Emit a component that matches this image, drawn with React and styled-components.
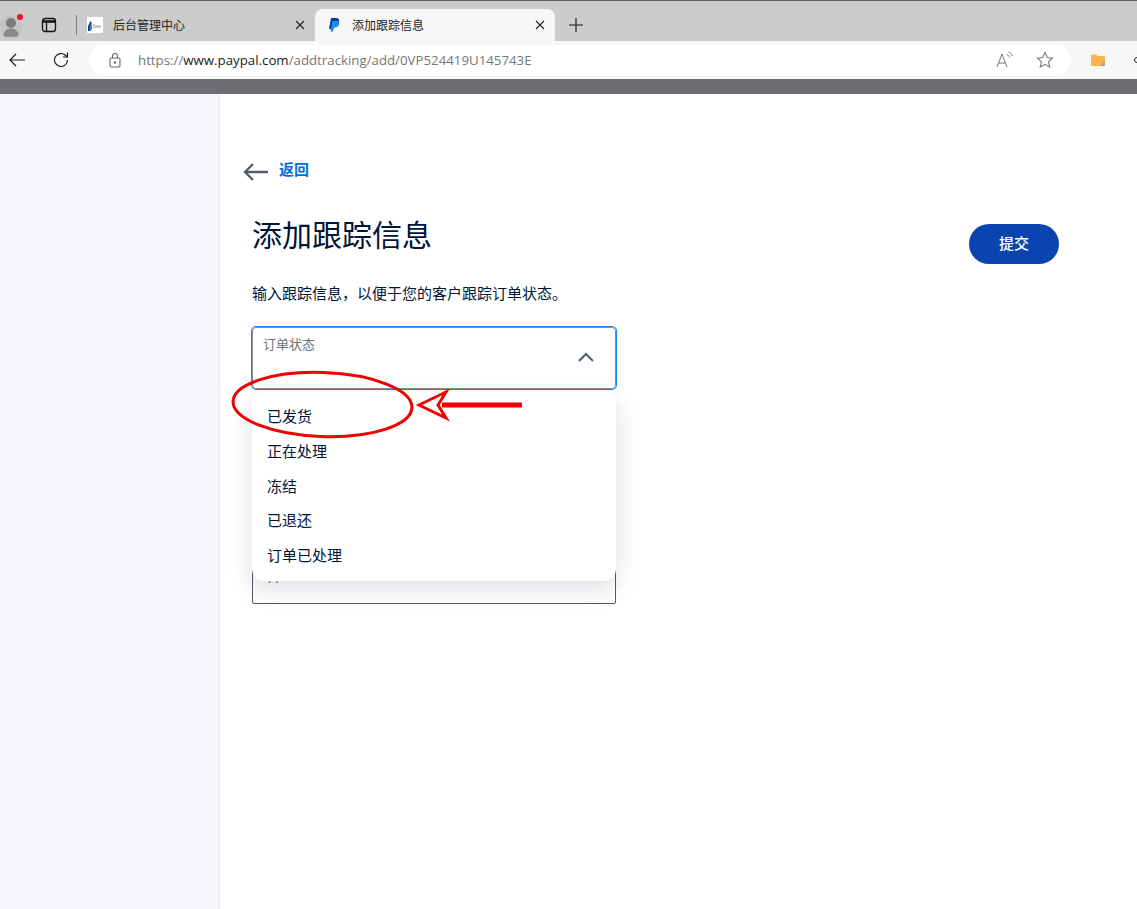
import React from 'react'
import styled, { createGlobalStyle } from 'styled-components'

const FONT = `"Liberation Sans", "Noto Sans CJK SC", sans-serif`

const Global = createGlobalStyle`
  html, body { margin: 0; padding: 0; background: #fff; }
  body { font-family: ${FONT}; overflow: hidden; }
`

const Page = styled.div`
  width: 1137px;
  height: 909px;
  display: flex;
  flex-direction: column;
  overflow: hidden;
  position: relative;
`

const TabBar = styled.div`
  height: 40px;
  background: #cccccc;
  border-top: 1px solid #5f5f5f;
  display: flex;
  align-items: flex-end;
  flex-shrink: 0;
`

const Profile = styled.div`
  width: 26px;
  height: 26px;
  position: relative;
  flex-shrink: 0;
  align-self: flex-start;
  margin-top: 13px;
`

const Badge = styled.span`
  position: absolute;
  top: 0;
  left: 17px;
  width: 6px;
  height: 6px;
  border-radius: 50%;
  background: #e8102a;
`

const TabIcon = styled.div`
  width: 46px;
  height: 32px;
  display: flex;
  align-items: center;
  justify-content: center;
  flex-shrink: 0;
`

const Divider = styled.div`
  width: 1px;
  height: 20px;
  background: #7d7d7d;
  margin: 0 10px 6px 4px;
  flex-shrink: 0;
`

const Tab = styled.div`
  width: ${p => p.$width}px;
  height: 32px;
  display: flex;
  align-items: center;
  flex-shrink: 0;
  background: ${p => (p.$active ? '#f7f7f7' : 'transparent')};
  border-radius: 8px 8px 0 0;
  font-size: 12px;
  color: #222;
  padding: 0 ${p => p.$padRight}px 1px ${p => p.$padLeft}px;
  box-sizing: border-box;
`

const TabTitle = styled.span`
  flex: 1;
  margin-left: ${p => p.$gap}px;
`

const NewTab = styled.div`
  width: 42px;
  height: 32px;
  display: flex;
  align-items: center;
  justify-content: center;
  flex-shrink: 0;
`

const Favicon = styled.div`
  width: 16px;
  height: 16px;
  background: #fff;
  flex-shrink: 0;
  overflow: hidden;
`

const Toolbar = styled.div`
  height: 38px;
  background: #f7f7f7;
  display: flex;
  align-items: center;
  flex-shrink: 0;
  padding-left: 5px;
`

const NavButton = styled.div`
  width: 24px;
  height: 24px;
  display: flex;
  align-items: center;
  justify-content: center;
  margin: 0 ${p => p.$right || 0}px 0 ${p => p.$left || 0}px;
  flex-shrink: 0;
`

const AddressBar = styled.div`
  width: 982px;
  height: 30px;
  border-radius: 15px;
  background: #fff;
  display: flex;
  align-items: center;
  flex-shrink: 0;
  padding: 0 17px 0 19px;
  box-sizing: border-box;
  gap: 22px;
`

const Url = styled.span`
  flex: 1;
  margin-left: -6px;
  font-family: "Open Sans", sans-serif;
  font-size: 13.27px;
  color: #767676;
  b { font-weight: 400; color: #1b1b1b; }
`

const EdgeDot = styled.span`
  width: 4px;
  height: 4px;
  border-radius: 50%;
  border: 1px solid #222;
  margin-left: 24px;
  flex-shrink: 0;
`

const Band = styled.div`
  height: 15px;
  background: #6e6d72;
  flex-shrink: 0;
`

const Body = styled.div`
  flex: 1;
  display: flex;
  min-height: 0;
`

const Sidebar = styled.aside`
  width: 219px;
  background: #f5f7fa;
  border-right: 1px solid #e6e9ee;
  flex-shrink: 0;
`

const Main = styled.main`
  flex: 1;
  padding: 63px 78px 0 23px;
  position: relative;
`

const BackRow = styled.div`
  display: flex;
  align-items: center;
  gap: 10px;
  height: 26px;
`

const BackIcon = styled.svg`
  margin-top: 4px;
`

const BackLink = styled.a`
  color: #0070e0;
  font-size: 15px;
  font-weight: 700;
  margin-top: -3px;
`

const Content = styled.div`
  padding-left: 9px;
`

const HeadRow = styled.div`
  display: flex;
  justify-content: space-between;
  margin-top: 30px;
`

const Title = styled.h1`
  margin: 1px 0 0;
  font-size: 30px;
  font-weight: 400;
  line-height: 44px;
  color: #001435;
`

const Submit = styled.button`
  width: 90px;
  height: 40px;
  border: none;
  border-radius: 20px;
  background: #0a44b0;
  color: #fff;
  font: 500 15px ${FONT};
  margin-top: 11px;
  padding: 0 0 3px;
`

const Description = styled.p`
  margin: 20px 0 0;
  font-size: 15px;
  line-height: 20px;
  color: #001435;
`

const FormColumn = styled.div`
  width: 365px;
  margin-top: 23px;
  position: relative;
`

const SelectBox = styled.div`
  height: 62px;
  box-sizing: border-box;
  border: 1px solid #878c96;
  border-radius: 4px;
  box-shadow: 0 0 0 1px #1a84ee;
  margin: 0 1px 0 0;
  padding: 7px 10px;
  position: relative;
`

const SelectLabel = styled.span`
  font-size: 13px;
  line-height: 17px;
  color: #6c7378;
`

const Chevron = styled.svg`
  position: absolute;
  right: 21px;
  top: 24px;
`

const NextField = styled.div`
  height: 60px;
  box-sizing: border-box;
  border: 1px solid #515a6e;
  border-radius: 2px;
  margin: 155px 1px 0 0;
  padding: 27px 14px 0;
  font-size: 16px;
  line-height: 20px;
  letter-spacing: 2px;
  color: #8a8f96;
`

const Menu = styled.ul`
  position: absolute;
  top: 65px;
  left: 0;
  width: 364px;
  height: 189px;
  box-sizing: border-box;
  list-style: none;
  margin: 0;
  padding: 8px 0 0;
  background: #fff;
  border-radius: 12px;
  box-shadow: 0 8px 24px rgba(0, 20, 53, 0.14);
`

const MenuItem = styled.li`
  height: 34.8px;
  line-height: 34.8px;
  padding-left: 15px;
  font-size: 15px;
  color: #001435;
`

const Annotation = styled.svg`
  position: absolute;
  left: 0;
  top: 0;
  pointer-events: none;
`

const options = ['已发货', '正在处理', '冻结', '已退还', '订单已处理']

function CloseIcon() {
  return (
    <svg width="10" height="10" viewBox="0 0 10 10" stroke="#222" strokeWidth="1.1">
      <path d="M1 1l8 8M9 1l-8 8" />
    </svg>
  )
}

function App() {
  return (
    <Page>
      <Global />
      <TabBar>
        <Profile>
          <svg width="26" height="26" viewBox="0 0 26 26">
            <circle cx="11" cy="13" r="11.500" fill="#c6c4c2" />
            <circle cx="11" cy="9" r="5" fill="#7c7c7c" />
            <path d="M3.500 22c0-5 3-7.500 7.500-7.500s7.500 2.500 7.500 7.500c-2 1.200-13 1.200-15 0z" fill="#8a8a8a" />
          </svg>
          <Badge />
        </Profile>
        <TabIcon>
          <svg width="16" height="16" viewBox="0 0 16 16" fill="none" stroke="#111" strokeWidth="1.3">
            <rect x="1.500" y="1.500" width="13" height="13" rx="2.500" />
            <path d="M1.500 4.500h13" strokeWidth="2.500" />
            <path d="M5.500 5v9.500" />
          </svg>
        </TabIcon>
        <Divider />
        <Tab $width={228} $padLeft={0} $padRight={10}>
          <Favicon>
            <svg width="16" height="16" viewBox="0 0 16 16">
              <path d="M1 9l2.500-5 1 1v6l-1 3H1z" fill="#1c3f94" />
              <path d="M3 8h2v4l-2 2z" fill="#1c8fd0" />
              <path d="M6.500 7h1v4h-1zM8.500 8h1v3h-1zM10.500 8h1v3h-1zM12.500 8h1v3h-1z" fill="#8d95a3" />
            </svg>
          </Favicon>
          <TabTitle $gap={10}>后台管理中心</TabTitle>
          <CloseIcon />
        </Tab>
        <Tab $active $width={240} $padLeft={13} $padRight={10}>
          <svg width="12" height="14" viewBox="0 0 12 14">
            <path d="M3 0h5c2.500 0 3.500 1.500 3 3.500C10.500 6 8.500 7 6.500 7H5l-.8 4H1z" fill="#0a3f9e" />
            <path d="M4.500 3h5c1.500 .5 2 2 1.500 3.500C10.500 8.500 9 9.500 7 9.500H6l-.8 4H2.500z" fill="#1492e0" />
          </svg>
          <TabTitle $gap={12}>添加跟踪信息</TabTitle>
          <CloseIcon />
        </Tab>
        <NewTab>
          <svg width="14" height="14" viewBox="0 0 14 14" stroke="#111" strokeWidth="1.1">
            <path d="M7 0v14M0 7h14" />
          </svg>
        </NewTab>
      </TabBar>

      <Toolbar>
        <NavButton $right={20}>
          <svg width="18" height="16" viewBox="0 0 18 16" fill="none" stroke="#1c1c1c" strokeWidth="1.2">
            <path d="M17 8H2M8 2L2 8l6 6" />
          </svg>
        </NavButton>
        <NavButton $right={16}>
          <svg width="18" height="18" viewBox="0 0 18 18" fill="none" stroke="#1c1c1c" strokeWidth="1.2">
            <path d="M15.500 9a6.500 6.500 0 1 1-2-4.700L15.500 6" />
            <path d="M15.500 1.500V6H11" />
          </svg>
        </NavButton>
        <AddressBar>
          <svg width="14" height="16" viewBox="0 0 14 16" fill="none" stroke="#666" strokeWidth="1.1">
            <rect x="2" y="6" width="10" height="9" rx="1.500" />
            <path d="M4.500 6V4a2.500 2.500 0 0 1 5 0v2" />
            <circle cx="7" cy="10.500" r=".7" fill="#666" />
          </svg>
          <Url>
            https://<b>www.paypal.com</b>/addtracking/add/0VP524419U145743E
          </Url>
          <svg width="18" height="18" viewBox="0 0 18 18" fill="none" stroke="#777" strokeWidth="1">
            <path d="M1 16L6 3l5 13M2.800 12h6.400" />
            <path d="M11 3.500c1.500 .5 2.200 1.500 2.500 3M12.500 1c2 .6 3.300 2 3.800 4" />
          </svg>
          <svg width="18" height="18" viewBox="0 0 18 18" fill="none" stroke="#777" strokeWidth="1.1">
            <path d="M9 1.500l2.300 5 5.200.6-3.900 3.600 1.100 5.300L9 13.300 4.300 16l1.100-5.300L1.500 7.100l5.200-.6z" />
          </svg>
        </AddressBar>
        <NavButton $left={15}>
          <svg width="14" height="12" viewBox="0 0 14 12">
            <path d="M0 1.500A1 1 0 0 1 1 .5h4l1.500 1.500H13a1 1 0 0 1 1 1V11a1 1 0 0 1-1 1H1a1 1 0 0 1-1-1z" fill="#fbb14c" />
            <path d="M14 7v4a1 1 0 0 1-1 1H9z" fill="#a9a29a" />
          </svg>
        </NavButton>
        <EdgeDot />
      </Toolbar>

      <Band />

      <Body>
        <Sidebar />
        <Main>
          <BackRow>
            <BackIcon width="26" height="20" viewBox="0 0 26 20" fill="none" stroke="#545d68" strokeWidth="2.400">
              <path d="M25 10H2M10 2l-8 8 8 8" />
            </BackIcon>
            <BackLink>返回</BackLink>
          </BackRow>
          <Content>
            <HeadRow>
              <Title>添加跟踪信息</Title>
              <Submit>提交</Submit>
            </HeadRow>
            <Description>输入跟踪信息，以便于您的客户跟踪订单状态。</Description>
            <FormColumn>
              <SelectBox>
                <SelectLabel>订单状态</SelectLabel>
                <Chevron width="16" height="10" viewBox="0 0 16 10" fill="none" stroke="#545d68" strokeWidth="2">
                  <path d="M1 9l7-7 7 7" />
                </Chevron>
              </SelectBox>
              <NextField>··</NextField>
              <Menu>
                {options.map(option => (
                  <MenuItem key={option}>{option}</MenuItem>
                ))}
              </Menu>
            </FormColumn>
          </Content>
        </Main>
      </Body>

      <Annotation width="1137" height="909" viewBox="0 0 1137 909">
        <ellipse cx="322.500" cy="404.500" rx="89.500" ry="32" fill="none" stroke="#f00000" strokeWidth="3" transform="rotate(2 322.500 404.500)" />
        <path d="M522 405H442" stroke="#f00000" strokeWidth="5" />
        <path d="M419 405l27-13-8 13 8 13z" fill="#fff" stroke="#f00000" strokeWidth="3" />
      </Annotation>
    </Page>
  )
}

export default App
